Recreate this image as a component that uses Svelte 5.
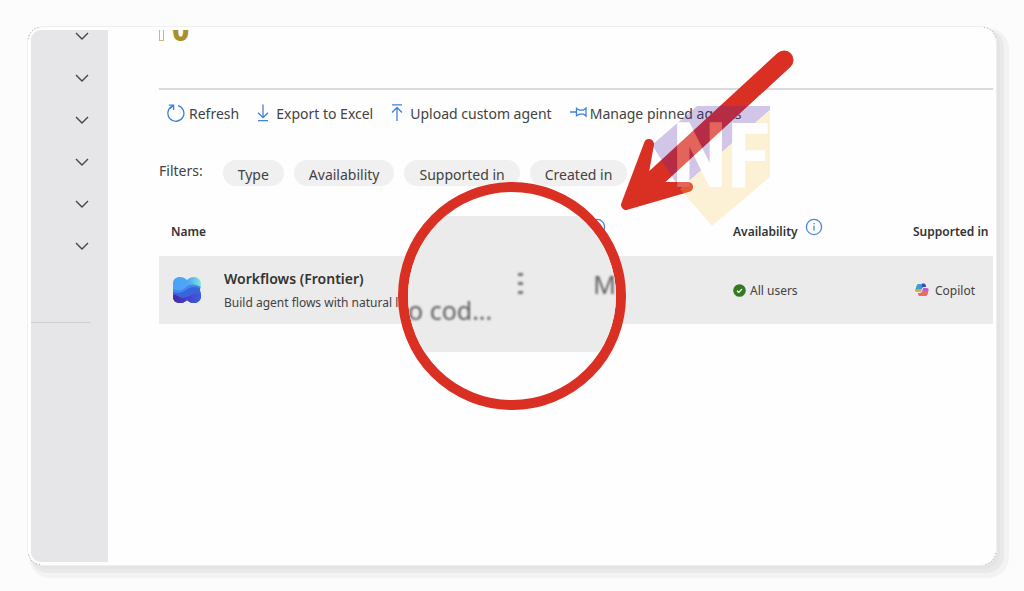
<script>
  const navGroups = ['Users', 'Devices', 'Teams', 'Agents', 'Billing', 'Setup'];
  const filters = ['Type', 'Availability', 'Supported in', 'Created in'];
  const actions = [
    { id: 'refresh', label: 'Refresh' },
    { id: 'export', label: 'Export to Excel' },
    { id: 'upload', label: 'Upload custom agent' },
    { id: 'pin', label: 'Manage pinned agents' }
  ];
  const corners = ['tl', 'tr', 'bl', 'br'];
</script>

{#snippet info()}
  <button class="info" aria-label="More information">
    <svg width="18" height="18" viewBox="0 0 18 18" fill="none" stroke="#4f86d9">
      <circle cx="9" cy="9" r="7.6" stroke-width="1.3" />
      <path d="M9 7.8v4.6M9 5v1.3" stroke-width="1.3" />
    </svg>
  </button>
{/snippet}

<div class="page">
  <div class="card">
    <nav class="sidebar">
      {#each navGroups as group}
        <button class="expand" aria-label={group}>
          <svg width="14" height="8" viewBox="0 0 14 8" fill="none" stroke="#454545" stroke-width="1.4">
            <path d="M1 1l6 6 6-6" />
          </svg>
        </button>
      {/each}
      <hr />
    </nav>

    <main>
      <div class="metric">
        <span class="bar"></span>
        <span class="count">0</span>
      </div>

      <div class="toolbar">
        {#each actions as action}
          <button class="action {action.id}">
            {#if action.id === 'refresh'}
              <svg width="18" height="20" viewBox="0 0 18 20" fill="none" stroke="#3f80dc" stroke-width="1.3">
                <path d="M11 2.6A8 8 0 1 1 5.2 3.2" />
                <path d="M1.8 2.2h4.8V7M6.4 2.4L3.2 5.6" />
              </svg>
            {:else if action.id === 'export'}
              <svg width="12" height="20" viewBox="0 0 12 20" fill="none" stroke="#3f80dc" stroke-width="1.3">
                <path d="M6 1.5v13M1 9.8l5 4.9 5-4.9M1 17.6h10" />
              </svg>
            {:else if action.id === 'upload'}
              <svg width="12" height="20" viewBox="0 0 12 20" fill="none" stroke="#3f80dc" stroke-width="1.3">
                <path d="M6 18V4.5M1 9.5l5-5 5 5M1 1.8h10" />
              </svg>
            {:else}
              <svg width="18" height="20" viewBox="0 0 18 20" fill="none" stroke="#3f80dc" stroke-width="1.3">
                <path d="M0 9h6.5M6.5 4.5v9M6.5 5.5l3 1.6h4l2.5-2v8l-2.5-2h-4l-3 1.6" />
              </svg>
            {/if}
            {action.label}
          </button>
        {/each}
      </div>

      <div class="filters">
        <span class="filters-label">Filters:</span>
        {#each filters as filter}
          <button class="pill">{filter}</button>
        {/each}
      </div>

      <table>
        <thead>
          <tr>
            <th>Name</th>
            <th class="col-host">{@render info()}</th>
            <th class="col-availability">Availability{@render info()}</th>
            <th class="col-supported">Supported in</th>
          </tr>
        </thead>
        <tbody>
          <tr>
            <td>
              <div class="agent">
                <svg width="30" height="28" viewBox="0 0 30 28">
                  <defs>
                    <linearGradient id="wave-top" x1="0" x2="1">
                      <stop offset="0" stop-color="#4aa0f8" />
                      <stop offset="0.55" stop-color="#4ea8f5" />
                      <stop offset="1" stop-color="#84ecdc" />
                    </linearGradient>
                    <linearGradient id="wave-bottom" x1="0" x2="1">
                      <stop offset="0" stop-color="#4e22a4" />
                      <stop offset="1" stop-color="#3d5fe0" />
                    </linearGradient>
                    <clipPath id="wave-shape">
                      <path d="M1 8C1 3 4 1 8 1c3 0 5 1 7 3 2-2 4-3 7-3 4 0 7 3 7 7 0 3-1 4-1 6s1 3 1 6c0 4-3 7-7 7-3 0-5-1-7-3-2 2-4 3-7 3-4 0-7-2-7-7z" />
                    </clipPath>
                  </defs>
                  <g clip-path="url(#wave-shape)">
                    <rect width="30" height="28" fill="url(#wave-top)" />
                    <path d="M0 12c4 4 10 3 14-1 4-4 11-3 16 1v16H0z" fill="#4684ee" />
                    <path d="M0 16c5 2 10 1 14-2 5-4 11-4 16 0v14H0z" fill="#3a64dd" />
                    <path d="M0 19c5-2 8 5 15 2 5-2 9-5 15-3v10H0z" fill="url(#wave-bottom)" />
                  </g>
                </svg>
                <div class="agent-info">
                  <div class="agent-name">Workflows (Frontier)</div>
                  <div class="agent-text">Build agent flows with natural la</div>
                </div>
              </div>
            </td>
            <td></td>
            <td>
              <div class="status">
                <svg width="13" height="13" viewBox="0 0 13 13">
                  <circle cx="6.5" cy="6.5" r="6.3" fill="#317a21" />
                  <path d="M4 6.7l1.8 1.7 3.2-3.4" fill="none" stroke="#fff" stroke-width="1.3" />
                </svg>
                All users
              </div>
            </td>
            <td>
              <div class="status product">
                <svg width="14" height="14" viewBox="0 0 14 14">
                  <path d="M4 1h5c1 0 1.400.8 1.700 1.800L11 4H8.600C7.400 4 7 5 6.600 6.400L5.800 9H2C.3 9 .2 7.500.6 6l1-3.300C2 1.500 2.800 1 4 1z" fill="#3f9ccf" />
                  <path d="M7 .6h2c1.200 0 1.600 1 2 3.400H8.400C7.400 4 7 4.600 6.800 5.400z" fill="#2b50c8" />
                  <path d="M.5 6.500C.2 8 .5 9 2 9h3.800l.9-3z" fill="#d4b43c" />
                  <path d="M10 13H5c-1 0-1.500-.8-1.800-2L3 10h2.400c1.200 0 1.600-1 2-2.400L8.200 5H12c1.700 0 1.800 1.500 1.400 3l-1 3.300C12 12.500 11.200 13 10 13z" fill="#c45ad0" />
                  <path d="M3 10h2.400c1 0 1.600-.8 1.900-2h5.900l-.8 3.300C12 12.600 11.200 13 10 13H5c-1.200 0-1.700-1-2-3z" fill="#ef6a5c" />
                </svg>
                Copilot
              </div>
            </td>
          </tr>
        </tbody>
      </table>
    </main>

    {#each corners as corner}
      <svg class="corner {corner}" width="16" height="16" viewBox="0 0 16 16" fill="none" stroke="#aaa">
        <path d="M.5 12A12 12 0 0 1 12 .5" stroke-dasharray="1 2" />
      </svg>
    {/each}

    <div class="lens">
      <div class="lens-row">
        <span class="lens-text">o cod...</span>
        <span class="lens-dots"><i></i><i></i><i></i></span>
        <span class="lens-next">M</span>
      </div>
    </div>

    <svg class="arrow" width="180" height="170" viewBox="0 0 180 170" fill="#d93023" stroke="#d93023" stroke-linecap="round" stroke-linejoin="round">
      <path d="M164 20L26 147" stroke-width="19" />
      <path d="M29 104L6 165 68 147 34 147 24 132z" stroke-width="10" />
    </svg>

    <svg class="watermark" width="120" height="122" viewBox="0 0 120 122">
      <path d="M2 40L47 1h73v4L30 84z" fill="#4d24a6" />
      <path d="M120 5v67L62 121 30 84z" fill="#fbcb60" />
      <text x="22" y="82">NF</text>
    </svg>
  </div>
</div>

<style>
  :global(body) {
    background: #fcfcfc;
    color: #424242;
    font-family: 'Noto Sans', 'Open Sans', sans-serif;
    font-size: 14px;
  }

  .page {
    box-sizing: border-box;
    min-height: 100vh;
    padding: 26px 27px 25px;
    display: flex;
  }

  .card {
    position: relative;
    box-sizing: border-box;
    flex: 1;
    min-width: 0;
    display: flex;
    padding: 3px;
    background: #fefefe;
    border: 1px solid #efefef;
    border-radius: 16px;
    box-shadow:
      3px 3px 0 0 #e4e4e4,
      5px 5px 0 2px #e9e9e9,
      7px 7px 0 5px #f3f3f3;
  }

  button {
    padding: 0;
    border: 0;
    background: none;
    color: inherit;
    font: inherit;
  }

  svg {
    display: block;
    flex: none;
  }

  .sidebar {
    flex: none;
    width: 77px;
    display: flex;
    flex-direction: column;
    overflow: hidden;
    background: #e6e6e8;
    border-radius: 10px 0 0 10px;
  }

  .expand {
    height: 42px;
    padding-left: 44px;
  }

  .expand:first-child {
    height: 27px;
    padding-bottom: 15px;
  }

  .sidebar hr {
    width: 60px;
    margin: 55px 0 0;
    border: 0;
    border-top: 1px solid #cfcfcf;
  }

  main {
    flex: 1;
    min-width: 0;
    padding-left: 51px;
  }

  .metric {
    display: flex;
    align-items: flex-start;
    gap: 8px;
    height: 58px;
    overflow: hidden;
    border-bottom: 2px solid #dadada;
  }

  .bar {
    box-sizing: border-box;
    width: 5px;
    height: 11px;
    border: 1px solid #cdb878;
    border-top: 0;
  }

  .count {
    margin-top: -18px;
    color: #a8912b;
    font-size: 30px;
    font-weight: 800;
    line-height: 36px;
  }

  .toolbar {
    display: flex;
    align-items: center;
    height: 46px;
    padding-left: 8px;
    gap: 18px;
    white-space: nowrap;
  }

  .action {
    display: flex;
    align-items: center;
    gap: 4px;
  }

  .export,
  .upload {
    gap: 7px;
  }

  .pin {
    gap: 2px;
  }

  .filters {
    display: flex;
    gap: 10px;
    margin-top: 24px;
  }

  .filters-label {
    margin-right: 10px;
    line-height: 22px;
  }

  .pill {
    height: 26px;
    padding: 2px 15px 0;
    border-radius: 13px;
    background: #f0f0f0;
    white-space: nowrap;
  }

  table {
    width: 100%;
    margin-top: 24px;
    border-collapse: collapse;
    table-layout: fixed;
  }

  th,
  td {
    padding: 0 0 0 12px;
    text-align: left;
    white-space: nowrap;
    font-size: 12px;
  }

  th {
    height: 38px;
    padding-top: 8px;
    color: #333;
    font-weight: 600;
    vertical-align: baseline;
  }

  td {
    height: 68px;
    background: #ebebeb;
  }

  .col-host {
    width: 140px;
  }

  .col-availability {
    width: 168px;
  }

  .col-supported {
    width: 80px;
  }

  .info {
    display: inline-block;
    margin: 0 0 2px 7px;
    vertical-align: baseline;
  }

  .agent {
    display: flex;
    align-items: center;
    gap: 22px;
    padding-left: 1px;
  }

  .agent-info {
    padding-top: 2px;
  }

  .agent-name {
    color: #333;
    font-size: 14px;
    font-weight: 600;
    line-height: 24px;
  }

  .agent-text {
    line-height: 24px;
  }

  .status {
    display: flex;
    align-items: center;
    gap: 4px;
  }

  .product {
    gap: 6px;
    padding-left: 2px;
  }

  .corner {
    position: absolute;
  }

  .tl {
    top: 0;
    left: 0;
  }

  .tr {
    top: 0;
    right: 0;
    transform: rotate(90deg);
  }

  .bl {
    bottom: 0;
    left: 0;
    transform: rotate(270deg);
  }

  .br {
    right: 0;
    bottom: 0;
    transform: rotate(180deg);
  }

  /* Magnified part of the row */
  .lens {
    position: absolute;
    top: 155px;
    left: 370px;
    box-sizing: border-box;
    width: 228px;
    height: 228px;
    padding-top: 24px;
    overflow: hidden;
    border: 10px solid #d93023;
    border-radius: 50%;
    background: #fefefe;
  }

  .lens-row {
    display: flex;
    height: 136px;
    background: #ebebeb;
    color: #606060;
    font-size: 25px;
    line-height: 36px;
    white-space: nowrap;
  }

  .lens-row > span {
    filter: blur(1px);
  }

  .lens-text {
    width: 112px;
    padding-top: 76px;
  }

  .lens-dots {
    display: flex;
    flex-direction: column;
    gap: 6px;
    width: 76px;
    padding-top: 57px;
  }

  .lens-dots i {
    width: 5px;
    height: 3px;
    background: #777;
  }

  .lens-next {
    padding-top: 50px;
  }

  .arrow {
    position: absolute;
    top: 13px;
    left: 592px;
  }

  .watermark {
    position: absolute;
    top: 78px;
    left: 622px;
    opacity: 0.25;
  }

  .watermark text {
    fill: #fff;
    font-family: 'Roboto Condensed', 'Open Sans Condensed', 'Liberation Sans', sans-serif;
    font-size: 90px;
    font-weight: 700;
  }
</style>
